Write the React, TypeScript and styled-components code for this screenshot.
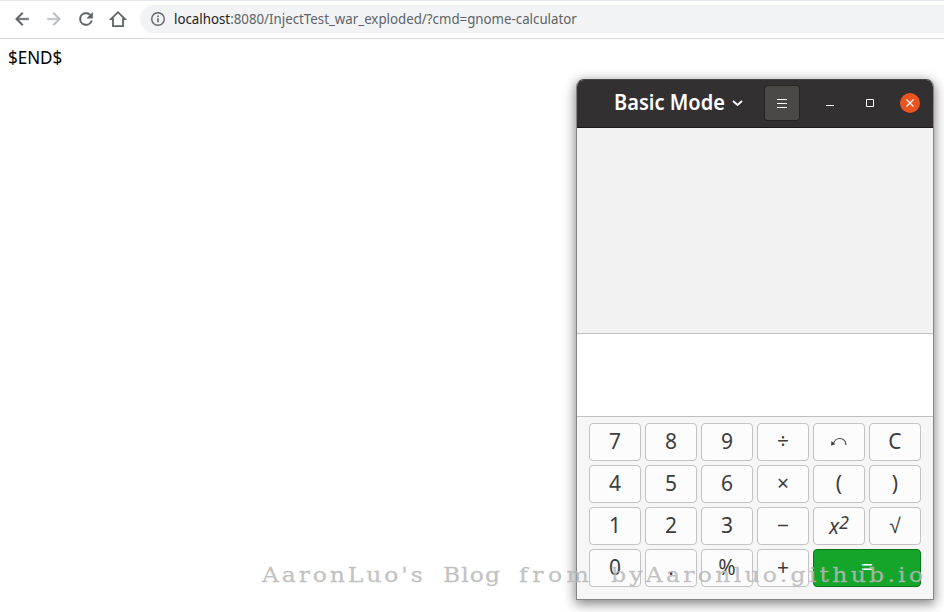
import React from 'react';
import styled, { createGlobalStyle } from 'styled-components';

const GlobalStyle = createGlobalStyle`
  * { box-sizing: border-box; }
  html, body { margin: 0; padding: 0; background: #fff; overflow: hidden; }
  body { font-family: 'Noto Sans', sans-serif; }
`;

const Page = styled.main`
  position: relative;
  width: 944px;
  height: 612px;
  overflow: hidden;
  background: #fff;
`;

const Toolbar = styled.header`
  display: flex;
  align-items: center;
  height: 39px;
  padding: 0 0 1px 12px;
  border-top: 1px solid #e2e5ea;
  border-bottom: 1px solid #d9dadf;
`;

const NavButton = styled.span<{ $faded?: boolean }>`
  display: flex;
  justify-content: center;
  width: 20px;
  margin-right: 12px;
  color: ${p => (p.$faded ? '#babcbe' : '#5f6368')};
  svg { display: block; }
`;

const AddressBar = styled.div`
  display: flex;
  align-items: center;
  flex: 1;
  height: 28px;
  padding-left: 10px;
  border-radius: 14px 0 0 14px;
  background: #f1f3f4;
  color: #5f6368;
  svg { display: block; flex: none; }
`;

const Url = styled.span`
  margin-left: 8px;
  font-size: 14px;
  line-height: 20px;
  white-space: nowrap;
  transform: scaleX(0.949);
  transform-origin: left center;
`;

const Host = styled.span`
  color: #202124;
`;

const Body = styled.p`
  margin: 7px 8px;
  width: max-content;
  color: #000;
  font-size: 17.6px;
  line-height: 22px;
  transform: scaleX(0.966);
  transform-origin: left center;
`;

const Calculator = styled.section`
  position: absolute;
  left: 576px;
  top: 79px;
  width: 358px;
  height: 521px;
  border: 1px solid #858585;
  border-top-color: #454545;
  border-radius: 8px 8px 0 0;
  background: #f6f6f6;
  box-shadow: 0 3px 12px 1px rgba(0, 0, 0, 0.48);
`;

const TitleBar = styled.div`
  display: flex;
  align-items: center;
  height: 48px;
  padding: 0 0 1px 37px;
  border-bottom: 1px solid #1e1a1b;
  border-radius: 7px 7px 0 0;
  background: #333031;
  color: #fff;
`;

const ModeMenu = styled.div`
  display: flex;
  align-items: center;
  flex: none;
  width: 151px;
  gap: 7px;
`;

const Title = styled.span`
  width: 111px;
  font-size: 22px;
  font-weight: 600;
  line-height: 28px;
  white-space: nowrap;
  transform: translateY(-2px) scaleX(0.91);
  transform-origin: left center;
`;

const MenuButton = styled.div`
  display: grid;
  place-items: center;
  flex: none;
  width: 34px;
  height: 34px;
  margin-right: 21px;
  border-radius: 3px;
  background: #4a4946;
  box-shadow: 0 0 0 1px #272425;
`;

const WindowButton = styled.div<{ $close?: boolean }>`
  display: grid;
  place-items: center;
  flex: none;
  width: 20px;
  height: 20px;
  margin-right: ${p => (p.$close ? 0 : 20)}px;
  border-radius: 50%;
  background: ${p => (p.$close ? '#e95420' : 'transparent')};
`;

const History = styled.div`
  height: 206px;
  border-bottom: 1px solid #c0c0c0;
  background: #f2f2f2;
`;

const Entry = styled.div`
  height: 83px;
  border-bottom: 1px solid #c0c0c0;
  background: #fff;
`;

const Keypad = styled.div`
  display: grid;
  grid-template-columns: repeat(6, 52px);
  grid-auto-rows: 38px;
  gap: 4px;
  padding: 6px 12px;
`;

const Key = styled.div<{ $primary?: boolean }>`
  display: grid;
  place-items: center;
  grid-column: span ${p => (p.$primary ? 2 : 1)};
  border: 1px solid ${p => (p.$primary ? '#0b7519' : '#c3c3c3')};
  border-radius: 4px;
  background: ${p => (p.$primary ? '#15a52a' : '#fcfcfc')};
  color: ${p => (p.$primary ? '#fff' : '#3d3d3d')};
  font-size: 21px;
  line-height: 30px;
`;

const KeyText = styled.span<{ $italic?: boolean }>`
  font-style: ${p => (p.$italic ? 'italic' : 'normal')};
  transform: translateY(${p => (p.$italic ? 0 : -1)}px);
  sup { font-size: 18px; line-height: 0; vertical-align: 5px; }
`;

const Watermark = styled.div`
  position: absolute;
  left: 262px;
  top: 560px;
  display: grid;
  grid-template-columns: 181px 76px 92px 320px;
  color: rgba(185, 185, 185, 0.85);
  font-family: 'DejaVu Serif', serif;
  font-size: 21px;
  line-height: 30px;
  white-space: nowrap;
  -webkit-text-stroke: 0.3px rgba(185, 185, 185, 0.85);
`;

const Word = styled.span<{ $tracking: number }>`
  width: max-content;
  letter-spacing: ${p => p.$tracking}px;
  transform: scaleX(1.12);
  transform-origin: left center;
`;

const UndoIcon = () => (
  <svg width="18" height="12" viewBox="0 0 18 12" fill="none">
    <path d="M3.500 8C4.2 4.500 7 2.5 9.500 2.5C13 2.5 15.700 5 16 9" stroke="#3d3d3d" strokeWidth="1.100" />
    <path d="M1.5 5L1 9.500L5.200 8.200Z" fill="#3d3d3d" />
  </svg>
);

const keys: React.ReactNode[] = [
  '7', '8', '9', '÷', <UndoIcon key="undo" />, 'C',
  '4', '5', '6', '×', '(', ')',
  '1', '2', '3', '−', <KeyText $italic key="sq">x<sup>2</sup></KeyText>, '√',
  '0', '.', '%', '+',
];

export default function App() {
  return (
    <Page>
      <GlobalStyle />
      <Toolbar>
        <NavButton>
          <svg width="20" height="20" viewBox="0 0 24 24" fill="currentColor" stroke="currentColor" strokeWidth=".5"><path d="M20 11H7.83l5.59-5.59L12 4l-8 8 8 8 1.41-1.41L7.83 13H20z" /></svg>
        </NavButton>
        <NavButton $faded>
          <svg width="20" height="20" viewBox="0 0 24 24" fill="currentColor" stroke="currentColor" strokeWidth=".4"><path d="M12 4l-1.41 1.41L16.17 11H4v2h12.17l-5.58 5.59L12 20l8-8z" /></svg>
        </NavButton>
        <NavButton>
          <svg width="20" height="20" viewBox="0 0 24 24" fill="currentColor" stroke="currentColor" strokeWidth=".5"><path d="M17.65 6.35A7.96 7.96 0 0 0 12 4a8 8 0 1 0 7.73 10h-2.08A6 6 0 1 1 12 6c1.66 0 3.14.69 4.22 1.78L13 11h7V4z" /></svg>
        </NavButton>
        <NavButton>
          <svg width="20" height="20" viewBox="0 0 20 20" fill="none" stroke="currentColor" strokeWidth="1.800"><path d="M3 10.200H5V17.200H15V10.200H17L10 3.200Z" /></svg>
        </NavButton>
        <AddressBar>
          <svg width="16" height="16" viewBox="0 0 16 16" fill="none"><circle cx="8" cy="8" r="6.300" stroke="currentColor" strokeWidth="1.400" /><path d="M8 7.200v4M8 4.500v1.500" stroke="currentColor" strokeWidth="1.600" /></svg>
          <Url><Host>localhost</Host>:8080/InjectTest_war_exploded/?cmd=gnome-calculator</Url>
        </AddressBar>
      </Toolbar>
      <Body>$END$</Body>
      <Calculator>
        <TitleBar>
          <ModeMenu>
            <Title>Basic Mode</Title>
            <svg width="11" height="8" viewBox="0 0 11 8" fill="none"><path d="M1 2l4.500 4L10 2" stroke="#fff" strokeWidth="1.800" /></svg>
          </ModeMenu>
          <MenuButton>
            <svg width="10" height="9" viewBox="0 0 10 9"><path d="M0 .5h10M0 4.500h10M0 8.500h10" stroke="#fff" shapeRendering="crispEdges" /></svg>
          </MenuButton>
          <WindowButton>
            <svg width="8" height="8" viewBox="0 0 8 8"><path d="M0 6.500h8" stroke="#fff" /></svg>
          </WindowButton>
          <WindowButton>
            <svg width="8" height="8" viewBox="0 0 8 8"><path d="M.5.5h7v7h-7z" fill="none" stroke="#fff" /></svg>
          </WindowButton>
          <WindowButton $close>
            <svg width="8" height="8" viewBox="0 0 8 8"><path d="M.5.5l7 7M7.500.5l-7 7" stroke="#fff" strokeWidth="1.300" /></svg>
          </WindowButton>
        </TitleBar>
        <History />
        <Entry />
        <Keypad>
          {keys.map((k, i) => (
            <Key key={i}>{typeof k === 'string' ? <KeyText>{k}</KeyText> : k}</Key>
          ))}
          <Key $primary><KeyText>=</KeyText></Key>
        </Keypad>
      </Calculator>
      <Watermark>
        <Word $tracking={2.55}>AaronLuo's</Word>
        <Word $tracking={0.9}>Blog</Word>
        <Word $tracking={4}>from</Word>
        <Word $tracking={2.9}>byAaronluo.github.io</Word>
      </Watermark>
    </Page>
  );
}
